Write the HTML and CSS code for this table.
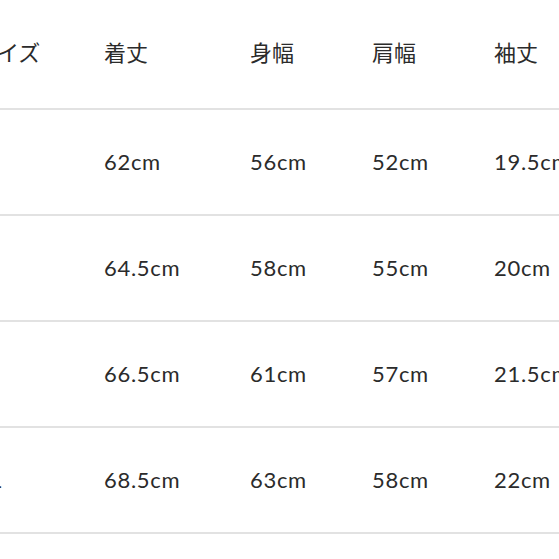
FILE: index.html
```html
<!DOCTYPE html>
<html lang="ja">
<head>
<meta charset="utf-8">
<link rel="stylesheet" href="styles.css">
</head>
<body>
<div class="table">
  <div class="row head">
    <div class="cell c0">サイズ</div>
    <div class="cell c1">着丈</div>
    <div class="cell c2">身幅</div>
    <div class="cell c3">肩幅</div>
    <div class="cell c4">袖丈</div>
  </div>
  <div class="row">
    <div class="cell c0">S</div>
    <div class="cell c1">62cm</div>
    <div class="cell c2">56cm</div>
    <div class="cell c3">52cm</div>
    <div class="cell c4">19.5cm</div>
  </div>
  <div class="row">
    <div class="cell c0">M</div>
    <div class="cell c1">64.5cm</div>
    <div class="cell c2">58cm</div>
    <div class="cell c3">55cm</div>
    <div class="cell c4">20cm</div>
  </div>
  <div class="row">
    <div class="cell c0">L</div>
    <div class="cell c1">66.5cm</div>
    <div class="cell c2">61cm</div>
    <div class="cell c3">57cm</div>
    <div class="cell c4">21.5cm</div>
  </div>
  <div class="row">
    <div class="cell c0">XL</div>
    <div class="cell c1">68.5cm</div>
    <div class="cell c2">63cm</div>
    <div class="cell c3">58cm</div>
    <div class="cell c4">22cm</div>
  </div>
</div>
</body>
</html>
```
FILE: styles.css
```css
html, body {
  margin: 0;
  padding: 0;
  background: #ffffff;
  overflow: hidden;
}
body {
  width: 559px;
  height: 559px;
  font-family: Lato, "Noto Sans CJK JP", sans-serif;
  color: #2b2b2b;
}
.table {
  margin-left: -25px;
  width: 700px;
}
.row {
  display: flex;
  align-items: center;
  box-sizing: border-box;
  height: 106px;
  padding-bottom: 2px;
  border-bottom: 2px solid #e2e2e2;
  font-size: 22px;
  letter-spacing: 0.7px;
}
.row.head {
  height: 110px;
  padding-bottom: 6px;
  letter-spacing: 0;
}
.cell {
  flex: none;
  white-space: nowrap;
}
.c0 { width: 129px; }
.c1 { width: 146px; }
.c2 { width: 122px; }
.c3 { width: 122px; }
.c4 { width: 122px; }
```
